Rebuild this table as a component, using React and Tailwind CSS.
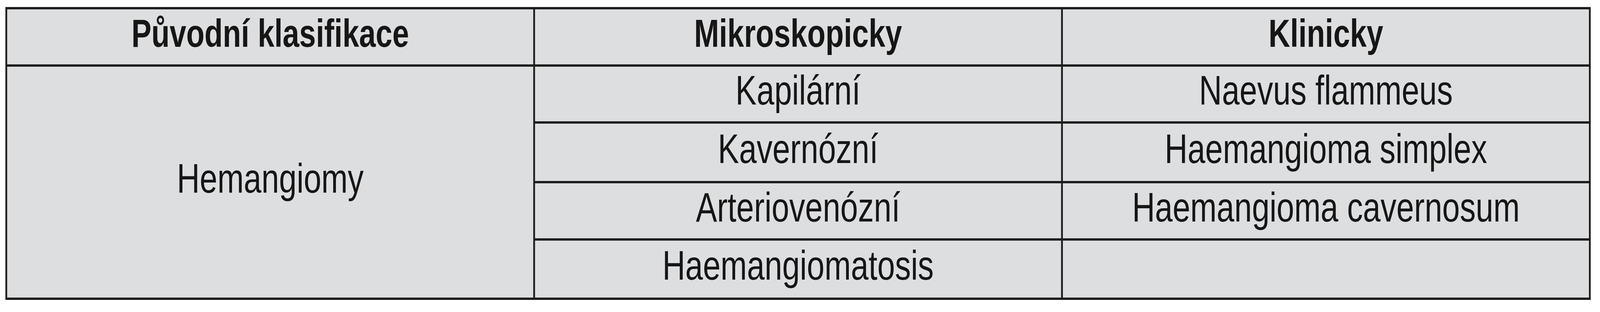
import { useEffect, useState } from 'react';

// the table is drawn for a 5350px wide frame; squeeze it horizontally when the window is narrower
const FRAME_W = 5350;

const ROWS = [
  { micro: 'Kapilární', clin: 'Naevus flammeus' },
  { micro: 'Kavernózní', clin: 'Haemangioma simplex' },
  { micro: 'Arteriovenózní', clin: 'Haemangioma cavernosum' },
  { micro: 'Haemangiomatosis', clin: '' },
];

const font = { fontFamily: '"Liberation Sans", Arial, sans-serif' };

function Cell({ children, className = '', bold }) {
  return (
    <div
      className={`bg-[#dddee0] flex items-center justify-center pb-[20px] leading-none whitespace-nowrap text-[#161616] ${bold ? 'font-bold text-[100px]' : 'text-[106px]'} ${className}`}
    >
      {children}
    </div>
  );
}

export default function App() {
  const [sx, setSx] = useState(() => Math.min(1, window.innerWidth / FRAME_W));

  useEffect(() => {
    const onResize = () => setSx(Math.min(1, window.innerWidth / FRAME_W));
    window.addEventListener('resize', onResize);
    return () => window.removeEventListener('resize', onResize);
  }, []);

  return (
    <div className="w-full h-[800px] overflow-hidden bg-white">
      <div
        className="w-[5350px] h-[800px] p-[18px] origin-top-left"
        style={{ ...font, transform: `scaleX(${sx})` }}
      >
        <div className="grid grid-cols-[1759px_1759px_1759px] grid-rows-[141px_140px_147px_141px_146px] gap-[6px] p-[6px] bg-[#1e1e1e] w-fit">
          <Cell bold>Původní klasifikace</Cell>
          <Cell bold>Mikroskopicky</Cell>
          <Cell bold>Klinicky</Cell>

          <Cell className="row-span-4 col-start-1 row-start-2">Hemangiomy</Cell>
          {ROWS.map((r) => (
            <div key={r.micro} className="contents">
              <Cell className="col-start-2">{r.micro}</Cell>
              <Cell className="col-start-3">{r.clin}</Cell>
            </div>
          ))}
        </div>
      </div>
    </div>
  );
}
